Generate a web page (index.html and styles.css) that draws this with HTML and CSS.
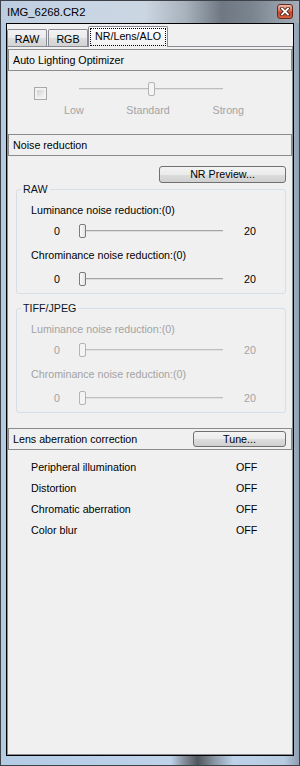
FILE: index.html
```html
<!DOCTYPE html>
<html>
<head>
<meta charset="utf-8">
<link rel="stylesheet" href="styles.css">
</head>
<body>
<div class="win">
  <div class="titlebar">
    <span class="title">IMG_6268.CR2</span>
    <span class="close">
      <svg width="10" height="9" viewBox="0 0 10 9">
        <path d="M2 1.5 L8 7.5 M8 1.5 L2 7.5" stroke="#4a1e14" stroke-width="3.6" stroke-linecap="square" fill="none"/>
        <path d="M2 1.5 L8 7.5 M8 1.5 L2 7.5" stroke="#ffffff" stroke-width="1.8" stroke-linecap="square" fill="none"/>
      </svg>
    </span>
  </div>
  <div class="client">
    <div class="tabs">
      <div class="tab">RAW</div>
      <div class="tab">RGB</div>
      <div class="tab sel"><span class="focus">NR/Lens/ALO</span></div>
    </div>
    <div class="panel">
      <div class="hdr hdr-first"><span>Auto Lighting Optimizer</span></div>
      <div class="alo">
        <span class="checkbox"></span>
        <div class="alo-slider">
          <div class="slider disabled"><div class="track"></div><div class="thumb" style="left:69px"></div></div>
          <div class="alo-labels"><span>Low</span><span>Standard</span><span>Strong</span></div>
        </div>
      </div>

      <div class="hdr"><span>Noise reduction</span></div>
      <div class="btn btn-nr">NR Preview...</div>

      <fieldset class="group">
        <legend>RAW</legend>
        <div class="lbl lbl-1">Luminance noise reduction:(0)</div>
        <div class="srow srow-1"><span class="min">0</span><div class="slider"><div class="track"></div><div class="thumb" style="left:0px"></div></div><span class="max">20</span></div>
        <div class="lbl lbl-2">Chrominance noise reduction:(0)</div>
        <div class="srow srow-2"><span class="min">0</span><div class="slider"><div class="track"></div><div class="thumb" style="left:0px"></div></div><span class="max">20</span></div>
      </fieldset>

      <fieldset class="group group-tiff disabled-group">
        <legend>TIFF/JPEG</legend>
        <div class="lbl lbl-1">Luminance noise reduction:(0)</div>
        <div class="srow srow-1"><span class="min">0</span><div class="slider disabled"><div class="track"></div><div class="thumb" style="left:0px"></div></div><span class="max">20</span></div>
        <div class="lbl lbl-2">Chrominance noise reduction:(0)</div>
        <div class="srow srow-2"><span class="min">0</span><div class="slider disabled"><div class="track"></div><div class="thumb" style="left:0px"></div></div><span class="max">20</span></div>
      </fieldset>

      <div class="hdr hdr-lens"><span>Lens aberration correction</span><span class="btn btn-tune">Tune...</span></div>
      <div class="items">
        <span>Peripheral illumination</span><span>OFF</span>
        <span>Distortion</span><span>OFF</span>
        <span>Chromatic aberration</span><span>OFF</span>
        <span>Color blur</span><span>OFF</span>
      </div>
    </div>
  </div>
</div>
</body>
</html>
```

FILE: styles.css
```css
* { box-sizing: border-box; }
html, body { margin: 0; padding: 0; }
body {
  width: 300px;
  height: 766px;
  overflow: hidden;
  font-family: "Liberation Sans", Arial, sans-serif;
  font-size: 10.7px;
  color: #000;
  background: #000;
}
.win {
  width: 300px;
  height: 766px;
  border: 1px solid #3d4248;
  display: flex;
  flex-direction: column;
  background: linear-gradient(90deg, #b4cbe4 0%, #bed3ea 57%, #8a95a2 61%, #50565d 66%, #8c99a8 72%, #bdd2e9 78%, #b7cbe0 95%, #8f9fb1 100%);
}
.titlebar {
  height: 22px;
  flex-shrink: 0;
  display: flex;
  align-items: flex-start;
  justify-content: space-between;
  background: linear-gradient(90deg, #bccde0 0%, #c8d5e4 25%, #cbd6e2 48%, #a7b2bd 62%, #6f7882 74%, #7a848e 84%, #a4afba 100%);
}
.title {
  font-size: 11.3px;
  line-height: 22px;
  padding-left: 6px;
  color: #000;
}
.close {
  width: 16px;
  height: 15px;
  margin: 3px 6px 0 0;
  border: 1px solid #6a2a1c;
  border-radius: 3px;
  background: linear-gradient(#ecb7a8 0%, #dc7c64 40%, #c9452b 55%, #d4603f 100%);
  display: flex;
  align-items: center;
  justify-content: center;
}
.close svg { display: block; }
.client {
  flex: 1;
  margin: 0 5px 9px;
  border: 1px solid #000;
  background: #f0f0f0;
  display: flex;
  flex-direction: column;
  min-height: 0;
}
.tabs {
  height: 22px;
  flex-shrink: 0;
  display: flex;
  align-items: flex-end;
}
.tab {
  width: 40px;
  height: 17px;
  border: 1px solid #898c95;
  border-bottom: none;
  border-radius: 2px 2px 0 0;
  background: linear-gradient(#f3f3f3 0%, #ebebeb 50%, #dedede 50%, #d3d3d3 100%);
  display: flex;
  align-items: center;
  justify-content: center;
  padding-top: 1px;
}
.tab + .tab { margin-left: 1px; }
.tab.sel {
  width: 80px;
  height: 21px;
  margin-left: 0;
  margin-bottom: -1px;
  padding: 1px;
  background: linear-gradient(#fdfdfd, #f5f5f5 60%, #f0f0f0);
  position: relative;
  z-index: 1;
  display: block;
}
.focus {
  display: flex;
  align-items: center;
  justify-content: center;
  height: 100%;
  border: 1px dotted #000;
  padding-bottom: 3px;
}
.panel {
  flex: 1;
  border: 1px solid #898c95;
  display: flex;
  flex-direction: column;
  min-height: 0;
}
.hdr {
  height: 22px;
  flex-shrink: 0;
  border: 1px solid #8b8c8c;
  display: flex;
  align-items: center;
  justify-content: space-between;
  padding-left: 4px;
  line-height: 13px;
}
.hdr-first { margin-top: 2px; }
.alo {
  height: 63px;
  flex-shrink: 0;
  display: flex;
  align-items: flex-start;
}
.checkbox {
  width: 13px;
  height: 13px;
  margin: 16px 0 0 26px;
  border: 1px solid #a9a9a9;
  padding: 2px;
  background: linear-gradient(135deg, #d2d2d2, #f4f4f4) content-box, #f2f2f2;
}
.alo-slider {
  width: 180px;
  margin: 11px 0 0 17px;
}
.alo-slider .slider { margin-left: 15px; }
.alo-labels {
  margin-top: 8px;
  line-height: 13px;
  display: flex;
  justify-content: space-between;
  color: #a3a3a3;
}
.slider {
  position: relative;
  width: 144px;
  height: 14px;
  padding-top: 6px;
  flex-shrink: 0;
}
.track {
  height: 2px;
  border-top: 1px solid #a6a6a6;
  border-bottom: 1px solid #dcdcdc;
}
.thumb {
  position: absolute;
  top: 0;
  width: 7px;
  height: 14px;
  border: 1px solid #7b7b7b;
  border-radius: 2px;
  background: linear-gradient(90deg, #fbfbfb, #e4e4e4);
}
.slider.disabled .track { border-top-color: #bdbdbd; border-bottom-color: #e2e2e2; }
.slider.disabled .thumb { border-color: #b4b4b4; background: #f4f4f4; }
.btn {
  border: 1px solid #707070;
  border-radius: 3px;
  background: linear-gradient(#f3f3f3 0%, #ebebeb 50%, #dddddd 50%, #d0d0d0 100%);
  display: flex;
  align-items: center;
  justify-content: center;
  line-height: 13px;
  flex-shrink: 0;
}
.btn-nr {
  width: 127px;
  height: 17px;
  margin: 10px 6px 0 auto;
}
.btn-tune {
  width: 93px;
  height: 16px;
  margin-right: 5px;
}
fieldset.group {
  margin: 0 6px 0 8px;
  padding: 0 4px 7px;
  border: 1px solid #d5dfe5;
  border-radius: 3px;
  min-inline-size: 0;
  flex-shrink: 0;
}
fieldset.group legend {
  padding: 0 2px;
  line-height: 13px;
  color: #0c1426;
}
fieldset.group-tiff { margin-top: 8px; }
.lbl {
  margin-left: 10px;
  line-height: 13px;
}
.lbl-1 { margin-top: 8px; }
.lbl-2 { margin-top: 11px; }
.srow {
  display: flex;
  align-items: center;
  height: 14px;
  line-height: 13px;
}
.srow-1 { margin-top: 7px; }
.srow-2 { margin-top: 10px; }
.min {
  width: 12px;
  margin-left: 30px;
  text-align: center;
}
.srow .slider { margin-left: 16px; }
.max { margin-left: 21px; }
.disabled-group .lbl,
.disabled-group .min,
.disabled-group .max { color: #a3a3a3; }
.hdr-lens { margin-top: 15px; }
.items {
  margin-top: 11px;
  padding-left: 23px;
  display: grid;
  grid-template-columns: 205px auto;
  row-gap: 8px;
  line-height: 13px;
}
```
